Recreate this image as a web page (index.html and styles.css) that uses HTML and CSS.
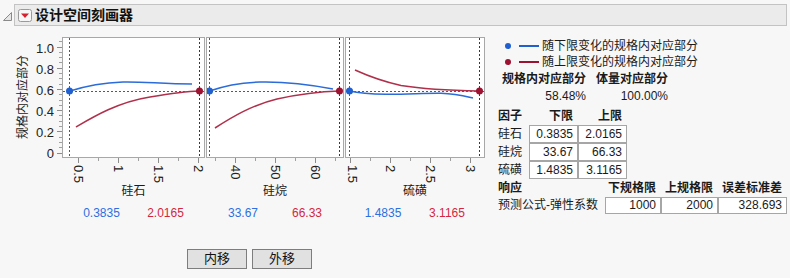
FILE: index.html
```html
<!DOCTYPE html>
<html lang="zh">
<head>
  <meta charset="UTF-8" />
  <title>设计空间刻画器</title>
  <link rel="stylesheet" href="styles.css">
</head>
<body>

  <!-- Judul -->
  <div class="header">
    <svg class="disclose" width="9" height="9" viewBox="0 0 9 9">
      <polygon points="8.5,0.5 8.5,8.5 0.5,8.5" fill="#e6e6e6" stroke="#8a8a8a" />
    </svg>
    <div class="titlebar">
      <svg class="menu-btn" width="14" height="13" viewBox="0 0 14 13">
        <rect x="0.5" y="0.5" width="13" height="12" rx="2" fill="#f6f6f6" stroke="#9a9a9a" />
        <polygon points="3,4.5 11,4.5 7,9" fill="#d4212f" />
      </svg>
      <span class="title">设计空间刻画器</span>
    </div>
  </div>

  <div class="main">
    <div class="profiler">
      <div class="chart">
        <div class="ytitle"><span>规格内对应部分</span></div>
        <svg class="yaxis" width="30" height="128" viewBox="0 0 30 128">
          <path d="M25 116.5H30M25 94.5H30M25 73.5H30M25 52.5H30M25 31.5H30M25 10.5H30" stroke="#8c8c8c" />
          <path d="M27 110.5H30M27 105.5H30M27 100.5H30M27 89.5H30M27 84.5H30M27 78.5H30M27 68.5H30M27 63.5H30M27 57.5H30M27 47.5H30M27 41.5H30M27 36.5H30M27 25.5H30M27 20.5H30M27 15.5H30M27 4.5H30" stroke="#a0a0a0" />
          <text x="22" y="116">0</text>
          <text x="22" y="95">0.2</text>
          <text x="22" y="74">0.4</text>
          <text x="22" y="53">0.6</text>
          <text x="22" y="32">0.8</text>
          <text x="22" y="11">1.0</text>
        </svg>

        <!-- 硅石 -->
        <div class="factor f1">
          <div class="plot">
            <svg width="141" height="119" viewBox="0 0 141 119">
              <line class="ref" x1="0" y1="53.5" x2="141" y2="53.5" />
              <line class="vlo" x1="6.5" y1="0" x2="6.5" y2="119" />
              <line class="vhi" x1="136.5" y1="0" x2="136.5" y2="119" />
              <path class="clo" d="M7 53 C18 49.5 35 45 60 44 C80 43.5 100 46 129 46" />
              <path class="chi" d="M13 89 C30 79 55 64 87 59 C105 56 120 53.5 136 53" />
              <circle class="dlo" cx="6.5" cy="53" r="3.5" />
              <circle class="dhi" cx="136.5" cy="53" r="3.5" />
            </svg>
          </div>
          <svg class="xaxis" width="143" height="26" viewBox="0 0 143 26">
            <path d="M16.5 0V5M56.5 0V5M96.5 0V5M136.5 0V5" stroke="#8c8c8c" />
            <path d="M36.5 0V3M76.5 0V3M116.5 0V3" stroke="#a0a0a0" />
            <text transform="translate(16.5 7) rotate(90)">0.5</text>
            <text transform="translate(56.5 7) rotate(90)">1</text>
            <text transform="translate(96.5 7) rotate(90)">1.5</text>
            <text transform="translate(136.5 7) rotate(90)">2</text>
          </svg>
          <div class="xtitle">硅石</div>
          <div class="limits"><span class="lo">0.3835</span><span class="hi">2.0165</span></div>
        </div>

        <!-- 硅烷 -->
        <div class="factor f2">
          <div class="plot">
            <svg width="136" height="119" viewBox="0 0 136 119">
              <line class="ref" x1="0" y1="53.5" x2="136" y2="53.5" />
              <line class="vlo" x1="2.5" y1="0" x2="2.5" y2="119" />
              <line class="vhi" x1="132.5" y1="0" x2="132.5" y2="119" />
              <path class="clo" d="M2.5 53 C15 48.5 35 44.5 53 44 C75 43.5 100 46 126 51" />
              <path class="chi" d="M8 90 C25 79 45 67 70 61 C95 55.5 115 53.5 132.5 53" />
              <circle class="dlo" cx="2.5" cy="53" r="3.5" />
              <circle class="dhi" cx="132.5" cy="53" r="3.5" />
            </svg>
          </div>
          <svg class="xaxis" width="138" height="26" viewBox="0 0 138 26">
            <path d="M29.5 0V5M69.5 0V5M109.5 0V5" stroke="#8c8c8c" />
            <path d="M9.5 0V3M49.5 0V3M89.5 0V3M129.5 0V3" stroke="#a0a0a0" />
            <text transform="translate(29.5 7) rotate(90)">40</text>
            <text transform="translate(69.5 7) rotate(90)">50</text>
            <text transform="translate(109.5 7) rotate(90)">60</text>
          </svg>
          <div class="xtitle">硅烷</div>
          <div class="limits"><span class="lo">33.67</span><span class="hi">66.33</span></div>
        </div>

        <!-- 硫磺 -->
        <div class="factor f3">
          <div class="plot">
            <svg width="138" height="119" viewBox="0 0 138 119">
              <line class="ref" x1="0" y1="53.5" x2="138" y2="53.5" />
              <line class="vlo" x1="3.5" y1="0" x2="3.5" y2="119" />
              <line class="vhi" x1="133.5" y1="0" x2="133.5" y2="119" />
              <path class="chi" d="M9 32 C20 37 35 43 55 47.5 C80 51.5 105 52.5 133.5 53" />
              <path class="clo" d="M3.5 53 C12 55 20 56 40 56.3 C60 56.5 80 55 95 55.3 C110 56 120 58.5 127 60" />
              <circle class="dlo" cx="3.5" cy="53" r="3.5" />
              <circle class="dhi" cx="133.5" cy="53" r="3.5" />
            </svg>
          </div>
          <svg class="xaxis" width="140" height="26" viewBox="0 0 140 26">
            <path d="M5.5 0V5M45.5 0V5M85.5 0V5M125.5 0V5" stroke="#8c8c8c" />
            <path d="M25.5 0V3M65.5 0V3M105.5 0V3" stroke="#a0a0a0" />
            <text transform="translate(7 7) rotate(90)">1.5</text>
            <text transform="translate(45.5 7) rotate(90)">2</text>
            <text transform="translate(85.5 7) rotate(90)">2.5</text>
            <text transform="translate(125.5 7) rotate(90)">3</text>
          </svg>
          <div class="xtitle">硫磺</div>
          <div class="limits"><span class="lo">1.4835</span><span class="hi">3.1165</span></div>
        </div>
      </div>

      <div class="buttons">
        <button>内移</button>
        <button>外移</button>
      </div>
    </div>

    <!-- Panel kanan -->
    <div class="report">
      <div class="legend-row">
        <span class="dot blue"></span><span class="line blue"></span>
        <span>随下限变化的规格内对应部分</span>
      </div>
      <div class="legend-row">
        <span class="dot red"></span><span class="line red"></span>
        <span>随上限变化的规格内对应部分</span>
      </div>

      <table class="summary">
        <tr><th>规格内对应部分</th><th class="c2">体量对应部分</th></tr>
        <tr><td>58.48%</td><td class="c2">100.00%</td></tr>
      </table>

      <table class="factors">
        <tr><th class="lbl">因子</th><th class="num">下限</th><th class="num">上限</th></tr>
        <tr><td class="lbl">硅石</td><td class="box">0.3835</td><td class="box">2.0165</td></tr>
        <tr><td class="lbl">硅烷</td><td class="box">33.67</td><td class="box">66.33</td></tr>
        <tr><td class="lbl">硫磺</td><td class="box">1.4835</td><td class="box">3.1165</td></tr>
      </table>

      <table class="responses">
        <tr><th class="lbl">响应</th><th class="num w1">下规格限</th><th class="num w2">上规格限</th><th class="num w3">误差标准差</th></tr>
        <tr><td class="lbl">预测公式-弹性系数</td><td class="box w1">1000</td><td class="box w2">2000</td><td class="box w3">328.693</td></tr>
      </table>
    </div>
  </div>

</body>
</html>
```

FILE: styles.css
```css
* {
  box-sizing: border-box;
}

body {
  margin: 0;
  width: 790px;
  height: 278px;
  overflow: hidden;
  background: #f7f7f7;
  color: #1a1a1a;
  font-family: "Liberation Sans", "Noto Sans CJK SC", sans-serif;
  font-size: 12px;
}

svg text {
  font-family: "Liberation Sans", "Noto Sans CJK SC", sans-serif;
  font-size: 13px;
  fill: #222;
}

/* Judul */
.header {
  display: flex;
  align-items: center;
  padding-top: 4px;
}

.disclose {
  margin: 2px 2px 0 3px;
}

.titlebar {
  flex: 1;
  height: 22px;
  margin-right: 3px;
  background: #ebebeb;
  border: 1px solid #c3c3c3;
  display: flex;
  align-items: center;
}

.menu-btn {
  margin-left: 3px;
}

.title {
  margin-left: 3px;
  font-size: 14px;
  font-weight: bold;
  line-height: 16px;
  color: #111;
}

.main {
  display: flex;
  align-items: flex-start;
}

/* Profiler kiri */
.profiler {
  width: 485px;
}

.chart {
  display: flex;
  align-items: flex-start;
  margin-top: 11px;
}

.ytitle {
  width: 32px;
  height: 121px;
  display: flex;
  align-items: center;
  justify-content: flex-end;
  padding-right: 2px;
}

.ytitle span {
  writing-mode: vertical-rl;
  text-orientation: sideways;
  transform: rotate(180deg);
  font-size: 12px;
  line-height: 14px;
}

.yaxis {
  display: block;
  overflow: visible;
}

.yaxis text {
  text-anchor: end;
  dominant-baseline: central;
}

.factor {
  display: flex;
  flex-direction: column;
}

.f1 { width: 143px; }
.f2 { width: 138px; margin-left: 1px; }
.f3 { width: 140px; margin-left: 1px; }

.plot {
  height: 121px;
  background: #fff;
  border: 1px solid #a8a8a8;
}

.plot svg {
  display: block;
}

.ref {
  stroke: #5a5a5a;
  stroke-dasharray: 2 2;
}

.vlo {
  stroke: #1f5fcf;
  stroke-dasharray: 2 2;
}

.vhi {
  stroke: #8e0f26;
  stroke-dasharray: 2 2;
}

.clo {
  fill: none;
  stroke: #2b6cd9;
  stroke-width: 1.5;
}

.chi {
  fill: none;
  stroke: #b0304b;
  stroke-width: 1.5;
}

.dlo { fill: #1f5fcf; }
.dhi { fill: #9c1230; }

.xaxis {
  display: block;
  overflow: visible;
}

.xaxis text {
  dominant-baseline: central;
}

.xtitle {
  text-align: center;
  line-height: 14px;
  font-size: 12px;
}

.limits {
  display: flex;
  justify-content: center;
  gap: 8px;
  margin-top: 8px;
  line-height: 14px;
}

.limits span {
  width: 56px;
  text-align: center;
}

.limits .lo { color: #2d6fe0; }
.limits .hi { color: #d3263f; }

.buttons {
  display: flex;
  gap: 5px;
  margin-top: 29px;
  padding-left: 187px;
}

.buttons button {
  width: 60px;
  height: 20px;
  padding: 0;
  font-family: "Liberation Sans", "Noto Sans CJK SC", sans-serif;
  font-size: 13px;
  line-height: 16px;
  color: #111;
  background: #e1e1e1;
  border: 1px solid #7d7d7d;
}

/* Panel kanan */
.report {
  margin-left: 13px;
  padding-top: 12px;
}

.legend-row {
  display: flex;
  align-items: center;
  height: 16px;
  line-height: 16px;
}

.dot {
  width: 6px;
  height: 6px;
  border-radius: 50%;
  margin-left: 7px;
}

.line {
  width: 20px;
  height: 2px;
  margin: 0 3px 0 8px;
}

.blue { background: #1f5fcf; }
.red { background: #9c1230; }

table {
  border-collapse: separate;
  border-spacing: 0;
  font-size: 12px;
}

th {
  font-weight: bold;
}

.summary {
  margin-top: 1px;
}

.summary th,
.summary td {
  height: 17px;
  line-height: 17px;
  padding: 0 4px;
  text-align: right;
}

.summary th {
  text-align: left;
}

.summary .c2 {
  padding-left: 6px;
}

.factors {
  margin-top: 2px;
}

.factors th,
.factors td {
  padding: 0 4px 0 0;
  height: 18px;
  line-height: 16px;
  text-align: right;
  border: 1px solid transparent;
}

.factors .lbl {
  width: 31px;
  padding: 0;
  border: none;
  text-align: left;
}

.factors .num,
.factors .box {
  width: 49px;
}

.box {
  background: #fff;
  border: 1px solid #a6a6a6 !important;
}

.responses {
  margin-top: 1px;
}

.responses th,
.responses td {
  padding: 0 4px 0 0;
  height: 17px;
  line-height: 15px;
  text-align: right;
  border: 1px solid transparent;
}

.responses .lbl {
  width: 107px;
  padding: 0;
  border: none;
  text-align: left;
}

.responses .w1 { width: 56px; }
.responses .w2 { width: 57px; }
.responses .w3 { width: 69px; }
```
